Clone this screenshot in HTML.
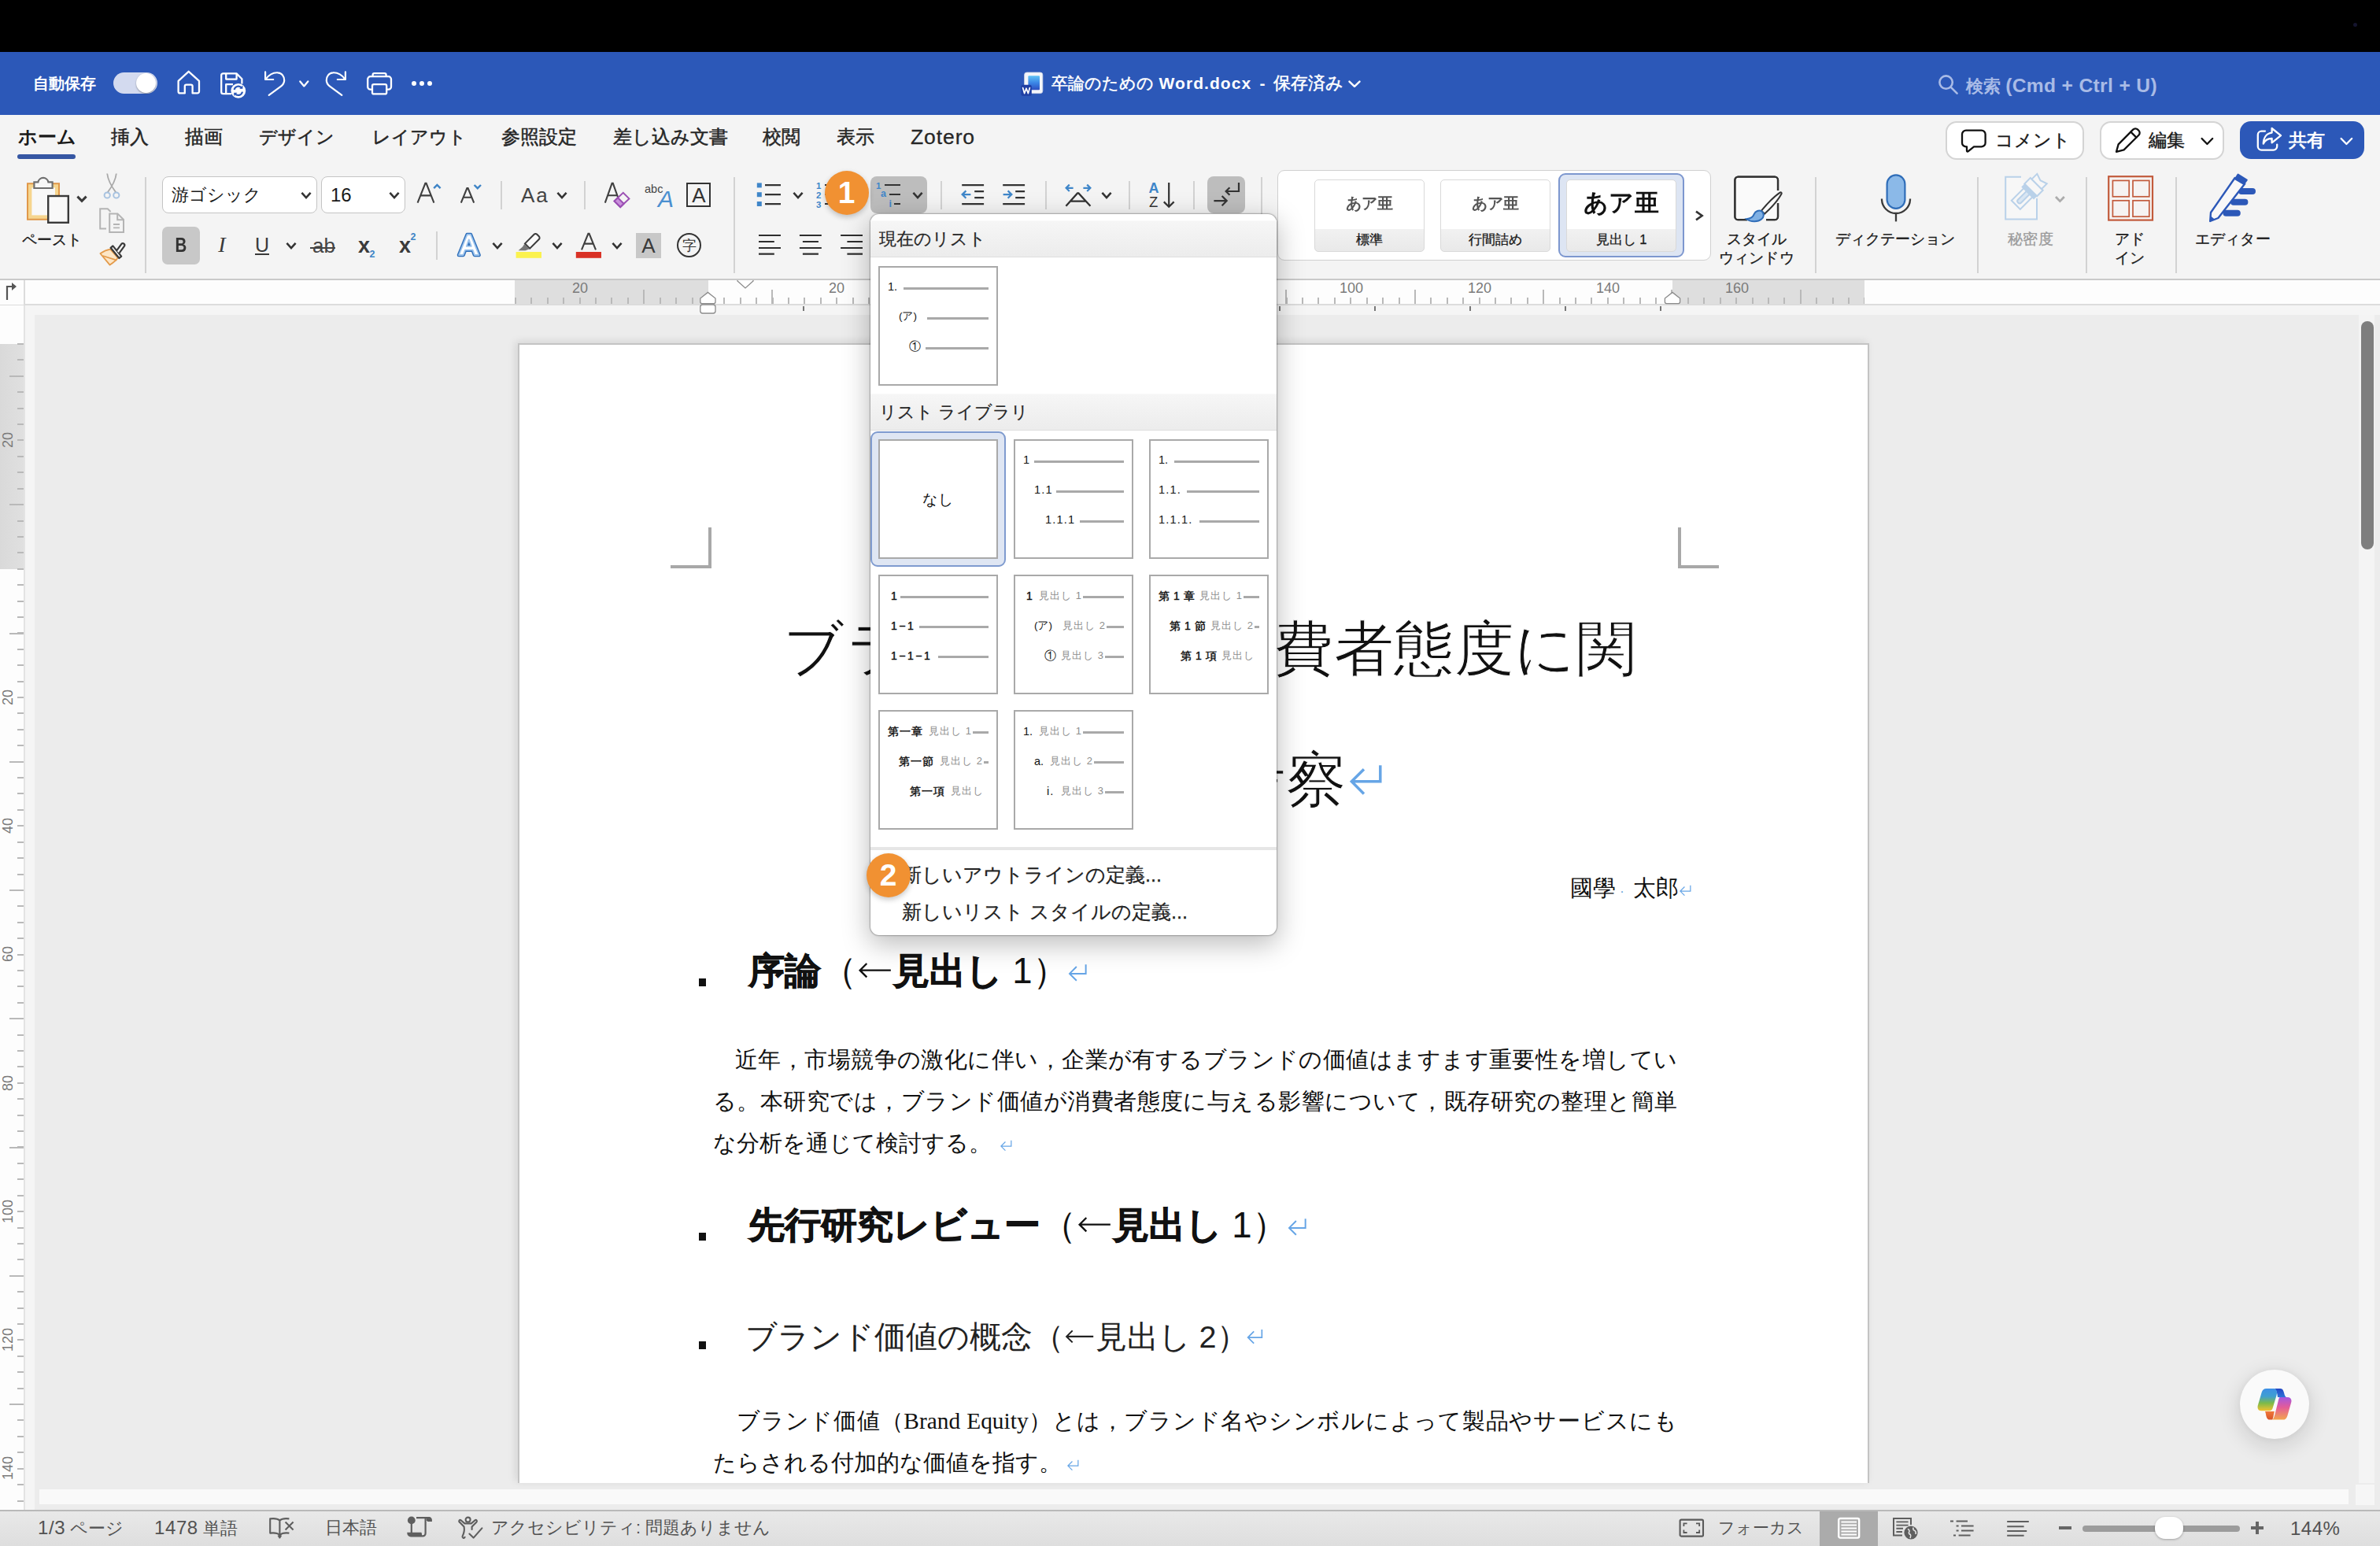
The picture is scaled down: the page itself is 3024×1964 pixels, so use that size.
<!DOCTYPE html>
<html lang="ja"><head>
<meta charset="utf-8">
<title>卒論のための Word.docx</title>
<style>
html,body{margin:0;padding:0}
body{width:3024px;height:1964px;position:relative;overflow:hidden;background:#ececec;font-family:"Liberation Sans",sans-serif;color:#222;-webkit-font-smoothing:antialiased}
.a{position:absolute}
.t{position:absolute;white-space:nowrap;line-height:1;margin:0}
.c{text-align:center}
svg{position:absolute;overflow:visible}
.sans{font-family:"Liberation Sans",sans-serif}
.serif{font-family:"Liberation Serif",serif}
.sep{position:absolute;width:2px;background:#d2d2d2}
.car{position:absolute}
.bt{position:absolute;white-space:nowrap;font-family:"Liberation Sans",sans-serif;font-size:29.4px;line-height:40px;height:40px;color:#111}
.just{text-align:justify;text-align-last:justify;text-justify:inter-character;white-space:nowrap;overflow:visible}
.ret{color:#5b9bd5}
.j{text-align:justify;text-align-last:justify;text-justify:inter-character}
svg.la{position:static;display:inline-block;width:1em;height:.6em;vertical-align:.06em;overflow:visible}
svg.rt{position:static;display:inline-block;width:.6em;height:.54em;vertical-align:-.02em;overflow:visible}
</style>
</head>
<body>
<svg width="0" height="0" style="position:absolute"><defs><symbol id="rt" viewBox="0 0 60 54"><path d="M55 3 V30 H7 M27.6 9.4 L7 30 L27.6 50.6" fill="none" stroke="#66a5e6" stroke-width="4.6" stroke-linejoin="miter"></path></symbol><symbol id="la" viewBox="0 0 100 60"><path d="M8 30 H94 M27 11 L8 30 L27 49" fill="none" stroke="currentColor" stroke-width="5.2"></path></symbol></defs></svg>
<!-- macOS menu area (black) -->
<div class="a" style="left:0;top:0;width:3024px;height:66px;background:#000"></div>
<div class="a" style="left:2990px;top:29px;width:5px;height:5px;border-radius:3px;background:#15152e"></div>
<!-- title bar -->
<div class="a" style="left:0;top:66px;width:3024px;height:80px;background:#2c58b8"></div>
<div class="t j" style="left: 42px; top: 92px; height: 28px; line-height: 28px; font-size: 20px; font-weight: bold; color: rgb(255, 255, 255); width: 80.02px;">自動保存</div>
<div class="a" style="left:144px;top:92px;width:56px;height:27px;border-radius:14px;background:#d3daef"></div>
<div class="a" style="left:173px;top:93px;width:25px;height:25px;border-radius:13px;background:#fff;box-shadow:0 1px 2px rgba(0,0,0,.35)"></div>
<div class="t j" style="left: 1336px; top: 91px; height: 30px; line-height: 30px; font-size: 21.2px; color: rgb(255, 255, 255); -webkit-text-stroke: 0.5px rgb(255, 255, 255); width: 130.02px;">卒論のための</div>
<div class="t" style="left:1472.6px;top:91px;height:30px;line-height:30px;font-size:21px;font-weight:bold;letter-spacing:1.05px;color:#fff">Word.docx</div>
<div class="t" style="left:1600.5px;top:91px;height:30px;line-height:30px;font-size:21px;font-weight:bold;color:#fff">-</div>
<div class="t j" style="left: 1618.4px; top: 91px; height: 30px; line-height: 30px; font-size: 21.8px; color: rgb(255, 255, 255); -webkit-text-stroke: 0.5px rgb(255, 255, 255); width: 89.02px;">保存済み</div>
<div class="t j" style="left: 2498px; top: 94px; height: 30px; line-height: 30px; font-size: 22px; font-weight: bold; color: rgb(169, 187, 230); width: 242.96px;">検索 <span style="font-size:24.6px;letter-spacing:.35px">(Cmd + Ctrl + U)</span></div>
<!-- title bar icons -->
<svg style="left:225px;top:89px" width="30" height="32" viewBox="0 0 30 32" fill="none" stroke="#fff" stroke-width="2.3" stroke-linejoin="round" stroke-linecap="round">
 <path d="M14.7 1.8 L1.6 13.8 V27.2 a2.2 2.2 0 0 0 2.2 2.2 H9.8 V20.6 a2 2 0 0 1 2-2 h5.8 a2 2 0 0 1 2 2 V29.4 H25.8 a2.2 2.2 0 0 0 2.2-2.2 V13.8 Z"></path>
</svg>
<svg style="left:279px;top:91px" width="34" height="34" viewBox="0 0 34 34" fill="none" stroke="#fff" stroke-width="2.3" stroke-linejoin="round">
 <path d="M4.6 2.4 H21.5 L28.4 9.3 V15.5 M15 28.2 H4.6 a2.4 2.4 0 0 1-2.4-2.4 V4.8 a2.4 2.4 0 0 1 2.4-2.4"></path>
 <path d="M8.2 2.6 V9.6 H21.6 V2.6"></path>
 <path d="M8.2 28 V16.2 H17"></path>
 <circle cx="23.8" cy="24.3" r="9.4" fill="#fff" stroke="none"></circle>
 <path d="M18.6 23 a5.4 5.4 0 0 1 9.6-2.2 M29 25.6 a5.4 5.4 0 0 1-9.6 2.2" stroke="#2c58b8" stroke-width="2.2"></path>
 <path d="M29.4 17.6 v4.2 h-4.2z M18.2 31 v-4.2 h4.2z" fill="#2c58b8" stroke="none"></path>
</svg>
<svg style="left:334px;top:89px" width="30" height="34" viewBox="0 0 30 34" fill="none" stroke="#fff" stroke-width="2.2" stroke-linecap="round" stroke-linejoin="round">
 <path d="M3.1 2.4 V12 H13.2"></path><path d="M3.6 11.6 C8 5.6 14 3 19 3.3 C24 3.4 27.2 8 27.2 13 C27.2 16.5 25.6 18.6 23 20.6 L7.7 31.9"></path>
</svg>
<svg style="left:380px;top:102px" width="14" height="10" viewBox="0 0 14 10" fill="none" stroke="#fff" stroke-width="2.3" stroke-linecap="round" stroke-linejoin="round"><path d="M1.3 1.5 L6.3 7.4 L11.3 1.5"></path></svg>
<svg style="left:412px;top:89px" width="30" height="34" viewBox="0 0 30 34" fill="none" stroke="#fff" stroke-width="2.2" stroke-linecap="round" stroke-linejoin="round">
 <g transform="translate(30,0) scale(-1,1)"><path d="M3.1 2.4 V12 H13.2"></path><path d="M3.6 11.6 C8 5.6 14 3 19 3.3 C24 3.4 27.2 8 27.2 13 C27.2 16.5 25.6 18.6 23 20.6 L7.7 31.9"></path></g>
</svg>
<svg style="left:465px;top:91px" width="34" height="30" viewBox="0 0 34 30" fill="none" stroke="#fff" stroke-width="2.3" stroke-linejoin="round">
 <path d="M8.6 6.2 V4.2 a2 2 0 0 1 2-2 h13 a2 2 0 0 1 2 2 V6.2"></path>
 <path d="M7.8 22.6 H5.6 a3.4 3.4 0 0 1-3.4-3.4 V9.6 a3.4 3.4 0 0 1 3.4-3.4 H28.6 a3.4 3.4 0 0 1 3.4 3.4 V19.2 a3.4 3.4 0 0 1-3.4 3.4 H26.4"></path>
 <rect x="8" y="16.2" width="18.2" height="12.2" rx="2"></rect>
</svg>
<div class="a" style="left:522.6px;top:103px;width:6px;height:6px;border-radius:3px;background:#fff"></div>
<div class="a" style="left:532.8px;top:103px;width:6px;height:6px;border-radius:3px;background:#fff"></div>
<div class="a" style="left:543px;top:103px;width:6px;height:6px;border-radius:3px;background:#fff"></div>
<!-- doc icon -->
<svg style="left:1296px;top:90px" width="32" height="34" viewBox="0 0 32 34">
 <defs><linearGradient id="dg" x1="0" y1="0" x2="0" y2="1"><stop offset="0" stop-color="#5fc3f5"></stop><stop offset=".5" stop-color="#3b86e6"></stop><stop offset="1" stop-color="#2d4fc0"></stop></linearGradient></defs>
 <rect x="5.6" y="2" width="23.2" height="26.6" rx="3" fill="#f4f6fa" stroke="#cfd6e6" stroke-width=".8"></rect>
 <rect x="10.4" y="6.2" width="14.6" height="18" rx="1" fill="url(#dg)"></rect>
 <rect x="1.4" y="17.8" width="13.4" height="14" rx="2.6" fill="#1f3fa3"></rect>
 <path d="M3.6 21.6 l2 7 l2.4-6.4 l2.4 6.4 l2-7" fill="none" stroke="#fff" stroke-width="1.7" stroke-linejoin="round" stroke-linecap="round"></path>
</svg>
<svg style="left:1713px;top:102px" width="17" height="10" viewBox="0 0 17 10" fill="none" stroke="#fff" stroke-width="2.5" stroke-linecap="round" stroke-linejoin="round"><path d="M1.5 1.6 L8 7.8 L14.5 1.6"></path></svg>
<!-- search icon -->
<svg style="left:2462px;top:94px" width="28" height="28" viewBox="0 0 28 28" fill="none" stroke="#a9bbe6" stroke-width="2.6" stroke-linecap="round"><circle cx="10.6" cy="10.6" r="8.2"></circle><path d="M16.8 16.8 L24.6 24.6"></path></svg>
<!-- ribbon background -->
<div class="a" style="left:0;top:146px;width:3024px;height:208px;background:#f4f4f4"></div>
<div class="a" style="left:0;top:354px;width:3024px;height:2px;background:#c9c9c9"></div>
<!-- tabs -->
<style>.tab{position:absolute;top:158px;height:32px;line-height:32px;font-size:23.1px;color:#262626;white-space:nowrap;-webkit-text-stroke:.5px #262626}</style>
<div class="tab j" style="left: 23px; font-weight: bold; color: rgb(26, 26, 26); font-size: 23.5px; -webkit-text-stroke: 0px; width: 74.02px;">ホーム</div>
<div class="a" style="left:22px;top:196px;width:74px;height:6px;border-radius:3px;background:#3657a3"></div>
<div class="tab j" style="left: 141px; font-size: 23.7px; width: 48.02px;">挿入</div>
<div class="tab j" style="left: 235px; font-size: 23.7px; width: 48.02px;">描画</div>
<div class="tab j" style="left: 329px; width: 96.02px;">デザイン</div>
<div class="tab j" style="left: 473px; width: 120.02px;">レイアウト</div>
<div class="tab j" style="left: 637px; font-size: 23.7px; width: 96.02px;">参照設定</div>
<div class="tab j" style="left: 779px; font-size: 23.7px; width: 146.02px;">差し込み文書</div>
<div class="tab j" style="left: 969px; font-size: 23.7px; width: 48.02px;">校閲</div>
<div class="tab j" style="left: 1063px; font-size: 23.7px; width: 48.02px;">表示</div>
<div class="tab" style="left:1157px;font-size:26.5px;letter-spacing:.9px;-webkit-text-stroke:.3px #262626">Zotero</div>
<!-- right buttons -->
<div class="a" style="left:2472px;top:154px;width:172px;height:45px;border:2px solid #d4d4d4;border-radius:14px;background:#fff;box-sizing:content-box"></div>
<div class="t j" style="left: 2535px; top: 163px; height: 30px; line-height: 30px; font-size: 23px; color: rgb(26, 26, 26); -webkit-text-stroke: 0.35px; width: 96.02px;">コメント</div>
<div class="a" style="left:2668px;top:154px;width:154px;height:45px;border:2px solid #d4d4d4;border-radius:14px;background:#fff"></div>
<div class="t j" style="left: 2730px; top: 163px; height: 30px; line-height: 30px; font-size: 23.4px; color: rgb(26, 26, 26); -webkit-text-stroke: 0.45px; width: 46.02px;">編集</div>
<div class="a" style="left:2846px;top:154px;width:158px;height:48px;border-radius:14px;background:#2c58b8"></div>
<div class="t j" style="left: 2908px; top: 163px; height: 30px; line-height: 30px; font-size: 23.4px; color: rgb(255, 255, 255); font-weight: bold; width: 46.02px;">共有</div>
<!-- ribbon: clipboard -->
<div class="t j" style="left: 28px; top: 294px; height: 22px; line-height: 22px; font-size: 18.7px; color: rgb(26, 26, 26); -webkit-text-stroke: 0.3px; width: 76.02px;">ペースト</div>
<div class="sep" style="left:184px;top:225px;height:122px"></div>
<!-- font boxes -->
<div class="a" style="left:206.2px;top:224.2px;width:194.6px;height:44.6px;border:1.5px solid #c4c4c4;border-radius:8px;background:#fff"></div>
<div class="t j" style="left: 218px; top: 233px; height: 30px; line-height: 30px; font-size: 22px; color: rgb(26, 26, 26); width: 114.02px;">游ゴシック</div>
<div class="a" style="left:408.4px;top:224.2px;width:104.6px;height:44.6px;border:1.5px solid #c4c4c4;border-radius:8px;background:#fff"></div>
<div class="t" style="left:420px;top:233px;height:30px;line-height:30px;font-size:24px;color:#1a1a1a">16</div>
<div class="sep" style="left:636px;top:230px;height:36px"></div>
<div class="sep" style="left:742px;top:230px;height:36px"></div>
<div class="sep" style="left:932px;top:225px;height:122px"></div>
<!-- row2 -->
<div class="a" style="left:206px;top:288px;width:48px;height:48px;border-radius:7px;background:#c8c8c8"></div>
<div class="sep" style="left:554px;top:294px;height:36px"></div>
<div class="a" style="left:808px;top:296px;width:32px;height:32px;background:#c8c8c8"></div>
<!-- paragraph group -->
<div class="a" style="left:1106px;top:224px;width:72px;height:47px;border-radius:8px;background:#bdbdbd"></div>
<div class="sep" style="left:1195px;top:230px;height:36px"></div>
<div class="sep" style="left:1328px;top:230px;height:36px"></div>
<div class="sep" style="left:1434px;top:230px;height:36px"></div>
<div class="sep" style="left:1516px;top:230px;height:36px"></div>
<div class="a" style="left:1534px;top:224px;width:48px;height:47px;border-radius:8px;background:#bdbdbd"></div>
<div class="sep" style="left:1602px;top:225px;height:122px"></div>
<!-- styles gallery -->
<div class="a" style="left:1623.4px;top:216.4px;width:549px;height:112.4px;border:1.6px solid #d0d0d0;border-radius:9px;background:#fff"></div>
<style>.sty{position:absolute;top:228px;width:140px;height:92px;border:1px solid #d9d9d9;border-radius:5px;background:linear-gradient(#fff 0,#fff 62.5px,#f1f1f1 62.5px,#e9e9e9 100%);box-sizing:border-box}
.styl{position:absolute;top:292px;width:140px;height:24px;line-height:24px;font-size:16.5px;color:#1a1a1a;text-align:center;white-space:nowrap;-webkit-text-stroke:.3px}
.styp{position:absolute;width:140px;text-align:center;white-space:nowrap}</style>
<div class="a" style="left:1980px;top:220px;width:156px;height:103px;border:2px solid #7d97cf;border-radius:9px;background:#dde5f3"></div>
<div class="sty" style="left:1670px"></div><div class="sty" style="left:1830px"></div><div class="sty" style="left:1990px"></div>
<div class="styp" style="left:1670px;top:244px;height:28px;line-height:28px;font-size:19.8px;color:#555;font-weight:bold;filter:blur(.7px)"><span class="j" style="display: inline-block; width: 60.02px; vertical-align: top;">あア亜</span></div>
<div class="styp" style="left:1830px;top:244px;height:28px;line-height:28px;font-size:19.8px;color:#555;font-weight:bold;filter:blur(.7px)"><span class="j" style="display: inline-block; width: 60.02px; vertical-align: top;">あア亜</span></div>
<div class="styp" style="left:1990px;top:238px;height:40px;line-height:40px;font-size:31px;color:#111;font-weight:bold;filter:blur(.6px)"><span class="j" style="display: inline-block; width: 95.02px; vertical-align: top;">あア亜</span></div>
<div class="styl" style="left:1670px"><span class="j" style="display: inline-block; width: 34.02px; vertical-align: top;">標準</span></div><div class="styl" style="left:1830px"><span class="j" style="display: inline-block; width: 68.02px; vertical-align: top;">行間詰め</span></div><div class="styl" style="left:1990px"><span class="j" style="display: inline-block; width: 64.79px; vertical-align: top;">見出し 1</span></div>
<!-- big buttons labels -->
<style>.bl{position:absolute;height:24px;line-height:24px;font-size:18.7px;color:#1a1a1a;-webkit-text-stroke:.3px;text-align:center;white-space:nowrap}</style>
<div class="bl" style="left:2172px;width:120px;top:292px"><span class="j" style="display: inline-block; width: 76.02px; vertical-align: top;">スタイル</span></div>
<div class="bl" style="left:2172px;width:120px;top:316px"><span class="j" style="display: inline-block; width: 95.02px; vertical-align: top;">ウィンドウ</span></div>
<div class="sep" style="left:2306px;top:225px;height:122px"></div>
<div class="bl" style="left:2318px;width:180px;top:292px"><span class="j" style="display: inline-block; width: 152.02px; vertical-align: top;">ディクテーション</span></div>
<div class="sep" style="left:2512px;top:225px;height:122px"></div>
<div class="bl" style="left:2520px;width:120px;top:292px;color:#9b9b9b"><span class="j" style="display: inline-block; width: 57.02px; vertical-align: top;">秘密度</span></div>
<div class="sep" style="left:2650px;top:225px;height:122px"></div>
<div class="bl" style="left:2646px;width:120px;top:292px"><span class="j" style="display: inline-block; width: 38.02px; vertical-align: top;">アド</span></div>
<div class="bl" style="left:2646px;width:120px;top:316px"><span class="j" style="display: inline-block; width: 38.02px; vertical-align: top;">イン</span></div>
<div class="sep" style="left:2764px;top:225px;height:122px"></div>
<div class="bl" style="left:2777px;width:120px;top:292px"><span class="j" style="display: inline-block; width: 95.02px; vertical-align: top;">エディター</span></div>
<!-- ===== ribbon icons A: clipboard + font ===== -->
<style>.ic{font-family:"Liberation Sans",sans-serif;position:absolute;white-space:nowrap;line-height:1;color:#3a3a3a}</style>
<!-- paste -->
<svg style="left:32px;top:222px" width="60" height="64" viewBox="0 0 60 64">
 <rect x="3" y="11.2" width="40" height="45.6" fill="#f6d58e" stroke="#e0984a" stroke-width="2"></rect>
 <rect x="8.4" y="16.4" width="29.6" height="35" fill="#f8f8f8"></rect>
 <path d="M11.4 17 V9.4 H16.4 a6.6 6.6 0 0 1 13 0 H34.6 V17 Z" fill="#f8f8f8" stroke="#6f6f6f" stroke-width="2.2" stroke-linejoin="miter"></path>
 <rect x="29.2" y="27" width="25.6" height="33.8" fill="#f9f9f9" stroke="#3a3a3a" stroke-width="2.4"></rect>
</svg>
<svg style="left:97px;top:248px" width="14" height="10" viewBox="0 0 14 10" fill="none" stroke="#3a3a3a" stroke-width="3" stroke-linejoin="miter"><path d="M1.4 1.6 L7 7.4 L12.6 1.6"></path></svg>
<!-- scissors -->
<svg style="left:130px;top:219px" width="24" height="35" viewBox="0 0 24 35" fill="none">
 <path d="M6.2 1.5 C7 9 11 17 17.4 25.6 M17.8 1.5 C17 9 13 17 6.6 25.6" stroke="#a9a9a9" stroke-width="1.8"></path>
 <circle cx="6.2" cy="29" r="3.6" stroke="#a8c3e0" stroke-width="2"></circle><circle cx="17.8" cy="29" r="3.6" stroke="#a8c3e0" stroke-width="2"></circle>
</svg>
<!-- copy -->
<svg style="left:125px;top:263px" width="36" height="36" viewBox="0 0 36 36" fill="none" stroke="#b4b4b4" stroke-width="2">
 <path d="M10 27.6 H2.2 V2.2 H11.8 L15.6 6"></path>
 <path d="M14.2 8.4 H24.4 L32 16 V32 H14.2 Z" fill="#f4f4f4"></path>
 <path d="M24.2 8.6 V16.2 H31.8"></path>
 <path d="M19 22 H27 M19 26.4 H27" stroke-width="1.8"></path>
</svg>
<!-- format painter -->
<svg style="left:125px;top:306px" width="36" height="34" viewBox="0 0 36 34">
 <path d="M15.2 10.6 C10 11.4 6 13.6 2.4 16 L14.6 30.6 C18.6 28 22.6 25 24.8 21.6 Z" fill="#fde6c6" stroke="#e39a4a" stroke-width="1.8" stroke-linejoin="round"></path>
 <path d="M5.6 19 L23.4 24.6" stroke="#e39a4a" stroke-width="1.8"></path>
 <path d="M15.6 8.8 L18.4 6.4 L29.2 19.6 L26.4 22 Z" fill="#f8f8f8" stroke="#3a3a3a" stroke-width="2.2" stroke-linejoin="round"></path>
 <path d="M23 12.6 L29.4 3.8 a2.3 2.3 0 0 1 3.6 2.8 L26.6 15.4" fill="#f8f8f8" stroke="#3a3a3a" stroke-width="2.2" stroke-linejoin="round"></path>
</svg>
<!-- font box carets -->
<svg style="left:382px;top:243px" width="14" height="11" viewBox="0 0 14 11" fill="none" stroke="#333" stroke-width="2.6"><path d="M1.4 1.8 L7 8 L12.6 1.8"></path></svg>
<svg style="left:494px;top:243px" width="14" height="11" viewBox="0 0 14 11" fill="none" stroke="#333" stroke-width="2.6"><path d="M1.4 1.8 L7 8 L12.6 1.8"></path></svg>
<!-- grow / shrink -->
<svg style="left:529px;top:231px" width="34" height="28" viewBox="0 0 34 28" fill="none">
 <path d="M1.6 26.6 L11.4 1.8 H12.6 L22.4 26.6 M5.4 17.4 H18.6" stroke="#3f3f3f" stroke-width="2.1"></path>
 <path d="M22.2 8.2 L26.4 4 L30.6 8.2" stroke="#3e84c6" stroke-width="2.4"></path>
</svg>
<svg style="left:584px;top:231px" width="30" height="28" viewBox="0 0 30 28" fill="none">
 <path d="M1.8 26.6 L9.4 8 H10.6 L18.2 26.6 M4.6 19.8 H15.4" stroke="#3f3f3f" stroke-width="2.1"></path>
 <path d="M18.6 4 L22.8 8.2 L27 4" stroke="#3e84c6" stroke-width="2.4"></path>
</svg>
<!-- Aa -->
<div class="ic" style="left:662px;top:233px;font-size:26px;letter-spacing:2px;height:30px;line-height:30px;color:#444">Aa</div>
<svg style="left:707px;top:243px" width="14" height="11" viewBox="0 0 14 11" fill="none" stroke="#333" stroke-width="2.6"><path d="M1.4 1.8 L7 8 L12.6 1.8"></path></svg>
<!-- clear formatting -->
<svg style="left:767px;top:231px" width="36" height="34" viewBox="0 0 36 34" fill="none">
 <path d="M1.8 26.6 L10.6 1.8 H11.8 L20.6 26.6 M5.2 17.2 H17.2" stroke="#3f3f3f" stroke-width="2.1"></path>
 <path d="M13.6 24.4 L24.8 13.8 L32.4 21.4 L21.2 32 Z" fill="#f4f4f4" stroke="#9b4fb3" stroke-width="2"></path>
 <path d="M13.6 24.4 L18 20.2 L25.6 27.8 L21.2 32 Z" fill="#c990dc" stroke="#9b4fb3" stroke-width="2"></path>
</svg>
<!-- phonetic guide -->
<div class="ic" style="left:819px;top:232px;font-size:14.5px;height:16px;line-height:16px;color:#444">abc</div>
<div class="ic" style="left:836px;top:238px;font-size:30px;height:30px;line-height:30px;font-style:italic;color:#4a8fd0">A</div>
<!-- boxed A -->
<div class="a" style="left:872px;top:232px;width:27px;height:27px;border:2.4px solid #333"></div>
<div class="ic" style="left:872px;top:234px;width:32px;text-align:center;font-size:26px;height:28px;line-height:28px;color:#333">A</div>
<!-- row 2: B I U ab x2 x2 -->
<div class="ic" style="left:206px;top:296px;width:48px;text-align:center;font-size:25.6px;font-weight:bold;height:30px;line-height:30px;color:#333;transform:scaleX(.8)">B</div>
<div class="ic serif" style="left:272px;top:296px;width:20px;text-align:center;font-size:28px;font-style:italic;height:30px;line-height:30px;color:#3a3a3a;font-family:'Liberation Serif',serif">I</div>
<div class="ic" style="left:322px;top:296px;width:22px;text-align:center;font-size:25px;height:30px;line-height:30px;color:#3a3a3a">U</div>
<div class="a" style="left:324px;top:321.5px;width:18px;height:2.2px;background:#3a3a3a"></div>
<svg style="left:363px;top:307px" width="14" height="11" viewBox="0 0 14 11" fill="none" stroke="#333" stroke-width="2.6"><path d="M1.4 1.8 L7 8 L12.6 1.8"></path></svg>
<div class="ic" style="left:397px;top:297px;font-size:26px;height:30px;line-height:30px;color:#444">ab</div>
<div class="a" style="left:394px;top:313.6px;width:32px;height:2px;background:#444"></div>
<div class="ic" style="left:455px;top:297px;font-size:27px;font-weight:bold;height:30px;line-height:30px;color:#3a3a3a">x</div>
<div class="ic" style="left:469.5px;top:317px;font-size:12.5px;font-weight:bold;height:13px;line-height:13px;color:#3e84c6">2</div>
<div class="ic" style="left:507px;top:297px;font-size:27px;font-weight:bold;height:30px;line-height:30px;color:#3a3a3a">x</div>
<div class="ic" style="left:521.5px;top:294.5px;font-size:12.5px;font-weight:bold;height:13px;line-height:13px;color:#3e84c6">2</div>
<!-- text effects A -->
<svg style="left:578px;top:294px" width="36" height="34" viewBox="0 0 36 34" fill="none" stroke-linejoin="round">
 <path d="M5 30 L15.6 4 H20 L30.6 30 H25 L22.6 23.6 H13 L10.6 30 Z M14.8 18.8 H20.8 L17.8 10.4 Z" fill="#fff" stroke="#2f6fba" stroke-width="4.6" fill-rule="evenodd"></path>
 <path d="M5 30 L15.6 4 H20 L30.6 30 H25 L22.6 23.6 H13 L10.6 30 Z M14.8 18.8 H20.8 L17.8 10.4 Z" fill="#fff" stroke="#9cc3ec" stroke-width="1.8" fill-rule="evenodd"></path>
</svg>
<svg style="left:625px;top:307px" width="14" height="11" viewBox="0 0 14 11" fill="none" stroke="#333" stroke-width="2.6"><path d="M1.4 1.8 L7 8 L12.6 1.8"></path></svg>
<!-- highlighter -->
<svg style="left:654px;top:294px" width="36" height="36" viewBox="0 0 36 36">
 <rect x="1.6" y="26" width="32.4" height="7.8" fill="#fbf24f"></rect>
 <path d="M13 15.4 L24.6 3.8 a2.6 2.6 0 0 1 3.7 0 L30.8 6.3 a2.6 2.6 0 0 1 0 3.7 L19.2 21.6 Z" fill="#fafafa" stroke="#3a3a3a" stroke-width="2"></path>
 <path d="M12.4 15.8 L19 22.2 L13.6 24.2 H4.6 L10 19.6 Z" fill="#767676"></path>
</svg>
<svg style="left:701px;top:307px" width="14" height="11" viewBox="0 0 14 11" fill="none" stroke="#333" stroke-width="2.6"><path d="M1.4 1.8 L7 8 L12.6 1.8"></path></svg>
<!-- font color -->
<svg style="left:730px;top:294px" width="36" height="36" viewBox="0 0 36 36" fill="none">
 <rect x="1.8" y="26" width="32.2" height="7.8" fill="#d93226"></rect>
 <path d="M9 23.4 L17.4 2.8 H18.6 L27 23.4 M12.2 15.6 H23.8" stroke="#3f3f3f" stroke-width="2.1"></path>
</svg>
<svg style="left:777px;top:307px" width="14" height="11" viewBox="0 0 14 11" fill="none" stroke="#333" stroke-width="2.6"><path d="M1.4 1.8 L7 8 L12.6 1.8"></path></svg>
<!-- shaded A -->
<div class="ic" style="left:808px;top:298px;width:32px;text-align:center;font-size:26px;height:28px;line-height:28px;color:#3a3a3a">A</div>
<!-- circled char -->
<div class="a" style="left:860px;top:296px;width:27px;height:27px;border:2.4px solid #333;border-radius:50%"></div>
<div class="ic" style="left:860px;top:301px;width:32px;text-align:center;font-size:18px;height:22px;line-height:22px;color:#333">字</div>
<!-- ===== ribbon icons B: paragraph group ===== -->
<!-- bullets -->
<svg style="left:960px;top:230px" width="36" height="34" viewBox="0 0 36 34">
 <g fill="#3f86c9"><rect x="1.8" y="2.4" width="6" height="6"></rect><rect x="1.8" y="14.2" width="6" height="6"></rect><rect x="1.8" y="26" width="6" height="6"></rect></g>
 <g stroke="#333" stroke-width="2.2"><path d="M12 5.2 H32 M12 17.1 H32 M12 29.1 H32"></path></g>
</svg>
<svg style="left:1007px;top:243px" width="14" height="11" viewBox="0 0 14 11" fill="none" stroke="#333" stroke-width="2.6"><path d="M1.4 1.8 L7 8 L12.6 1.8"></path></svg>
<!-- numbering (mostly hidden by badge) -->
<div class="ic" style="left:1037px;top:230px;font-size:11.5px;font-weight:bold;height:12px;line-height:12px;color:#3f86c9">1</div>
<div class="ic" style="left:1037px;top:242px;font-size:11.5px;font-weight:bold;height:12px;line-height:12px;color:#3f86c9">2</div>
<div class="ic" style="left:1037px;top:254px;font-size:11.5px;font-weight:bold;height:12px;line-height:12px;color:#3f86c9">3</div>
<div class="a" style="left:1048px;top:234px;width:20px;height:2.2px;background:#333"></div>
<div class="a" style="left:1048px;top:246px;width:20px;height:2.2px;background:#333"></div>
<div class="a" style="left:1048px;top:258px;width:20px;height:2.2px;background:#333"></div>
<!-- multilevel icon (on dark button) -->
<div class="ic" style="left:1113px;top:230px;font-size:11.5px;font-weight:bold;height:12px;line-height:12px;color:#3f86c9">1</div>
<div class="ic" style="left:1119px;top:240px;font-size:12.5px;font-weight:bold;height:13px;line-height:13px;color:#3f86c9">a</div>
<div class="ic" style="left:1129.4px;top:252.6px;font-size:12.5px;font-weight:bold;height:13px;line-height:13px;color:#3f86c9">i</div>
<div class="a" style="left:1124px;top:234px;width:20px;height:2.2px;background:#333"></div>
<div class="a" style="left:1129.6px;top:246px;width:14.4px;height:2.2px;background:#333"></div>
<div class="a" style="left:1136px;top:258px;width:8px;height:2.2px;background:#333"></div>
<svg style="left:1159px;top:243px" width="14" height="11" viewBox="0 0 14 11" fill="none" stroke="#333" stroke-width="2.6"><path d="M1.4 1.8 L7 8 L12.6 1.8"></path></svg>
<!-- decrease / increase indent -->
<svg style="left:1220px;top:230px" width="34" height="34" viewBox="0 0 34 34" fill="none">
 <path d="M2.2 5.2 H30.1 M18.2 13.1 H30.1 M18.2 21.1 H30.1 M2.2 29.1 H30.1" stroke="#333" stroke-width="2.2"></path>
 <path d="M2.6 17.1 H13.4 M7.4 12.4 L2.6 17.1 L7.4 21.8" stroke="#3f86c9" stroke-width="2.2"></path>
</svg>
<svg style="left:1272px;top:230px" width="34" height="34" viewBox="0 0 34 34" fill="none">
 <path d="M2.2 5.2 H30.1 M18.2 13.1 H30.1 M18.2 21.1 H30.1 M2.2 29.1 H30.1" stroke="#333" stroke-width="2.2"></path>
 <path d="M2.6 17.1 H13.4 M8.6 12.4 L13.4 17.1 L8.6 21.8" stroke="#3f86c9" stroke-width="2.2"></path>
</svg>
<!-- char scale -->
<svg style="left:1352px;top:230px" width="38" height="34" viewBox="0 0 38 34" fill="none">
 <path d="M2.4 31.8 L17 15.4 H18.4 L33.4 31.8 M8.4 25.6 H27.4" stroke="#333" stroke-width="2.3"></path>
 <path d="M2.6 8.8 H11.6 M6.8 4.6 L2.6 8.8 L6.8 13 M24.4 8.8 H33.4 M29.2 4.6 L33.4 8.8 L29.2 13" stroke="#3f86c9" stroke-width="2.2"></path>
</svg>
<svg style="left:1399px;top:243px" width="14" height="11" viewBox="0 0 14 11" fill="none" stroke="#333" stroke-width="2.6"><path d="M1.4 1.8 L7 8 L12.6 1.8"></path></svg>
<!-- sort -->
<div class="ic" style="left:1459.4px;top:229.6px;font-size:18px;font-weight:bold;height:18px;line-height:18px;color:#3f86c9">A</div>
<div class="ic" style="left:1460px;top:247.6px;font-size:18.5px;height:18px;line-height:18px;color:#333">Z</div>
<svg style="left:1476px;top:230px" width="18" height="36" viewBox="0 0 18 36" fill="none" stroke="#333" stroke-width="2.2"><path d="M9.2 2 V32.6 M2.8 26.4 L9.2 32.8 L15.6 26.4"></path></svg>
<!-- show marks -->
<svg style="left:1538px;top:228px" width="40" height="38" viewBox="0 0 40 38" fill="none" stroke="#333" stroke-width="2.2">
 <path d="M36 4 V15 H19.6 M24.4 10.2 L19.6 15 L24.4 19.8"></path>
 <path d="M4.4 27.1 H20.6 M14.6 21 L20.7 27.1 L14.6 33.2"></path>
</svg>
<!-- row 2 align -->
<svg style="left:962px;top:296px" width="140" height="30" viewBox="0 0 140 30" fill="none" stroke="#2e2e2e" stroke-width="2.1">
 <path d="M2 3 H30 M2 11 H21.8 M2 19 H30 M2 26.6 H21.8"></path>
 <path d="M53.9 3 H81.8 M57.9 11 H77.9 M53.9 19 H81.8 M57.9 26.6 H77.9"></path>
 <path d="M106.1 3 H134 M114.4 11 H134 M106.1 19 H134 M114.4 26.6 H134"></path>
</svg>
<!-- gallery arrow -->
<svg style="left:2153px;top:267px" width="12" height="14" viewBox="0 0 12 14" fill="none" stroke="#333" stroke-width="2.6"><path d="M2 1.6 L9.6 7 L2 12.4"></path></svg>
<!-- style window -->
<svg style="left:2202px;top:222px" width="66" height="62" viewBox="0 0 66 62" fill="none">
 <path d="M18 57.2 H6.4 a4 4 0 0 1-4-4 V6.6 a4 4 0 0 1 4-4 H53 a4 4 0 0 1 4 4 V20 M57 36 V53.2 a4 4 0 0 1-4 4 H42" stroke="#333" stroke-width="2.3" fill="none"></path>
 <rect x="3.6" y="3.8" width="52.2" height="52.2" rx="3" fill="#fafafa"></rect>
 <path d="M18 57.2 H6.4 a4 4 0 0 1-4-4 V6.6 a4 4 0 0 1 4-4 H53 a4 4 0 0 1 4 4 V20 M57 36 V53.2 a4 4 0 0 1-4 4 H42" stroke="#333" stroke-width="2.3" fill="none"></path>
 <path d="M36 45.6 C44 36 53 27 59.6 22.6 C61 21.8 62.2 23 61.4 24.6 C57.4 32 48.6 41.8 40.2 49.6 Z" fill="#fafafa" stroke="#333" stroke-width="2"></path>
 <path d="M36.6 46.4 C33 44.6 28.2 46 26.8 49.8 C25.6 53.2 22.4 55.6 17 56.2 C22 60 31.6 60.4 36 56.6 C39.6 53.6 39.8 49.4 36.6 46.4 Z" fill="#7fb0e4" stroke="#2f6db8" stroke-width="2"></path>
</svg>
<!-- dictation mic -->
<svg style="left:2386px;top:218px" width="46" height="66" viewBox="0 0 46 66" fill="none">
 <rect x="11.6" y="4.4" width="22.8" height="42.4" rx="11.4" fill="#8bb9e8" stroke="#2f6db8" stroke-width="2.2"></rect>
 <path d="M5 34.6 V35 a18 18 0 0 0 36 0 V34.6" stroke="#3a3a3a" stroke-width="2.3"></path>
 <path d="M23 53 V63.4" stroke="#3a3a3a" stroke-width="2.3"></path>
</svg>
<!-- sensitivity (disabled) -->
<svg style="left:2544px;top:218px" width="84" height="66" viewBox="0 0 84 66" fill="none" stroke="#b9d1e9" stroke-width="2">
 <path d="M24 6.8 H4.2 V60.6 H44 V34" fill="#f7f7f7"></path>
 <g transform="translate(11.8,36.8) rotate(-45)">
  <rect x="0" y="0" width="32" height="15.6" fill="#f7f7f7"></rect>
  <rect x="4" y="5" width="20" height="5.6" rx="2.8" fill="#d9e6f3"></rect>
  <rect x="21" y="-3.4" width="5.8" height="22.4" fill="#b9d1e9" stroke="none"></rect>
  <rect x="26.8" y="-3.4" width="10.6" height="22.4" fill="#f7f7f7"></rect>
  <path d="M37.4 -1 H47 L44 7.8 L47 16.6 H37.4 Z" fill="#f7f7f7"></path>
 </g>
 <path d="M68 32 L73.4 37.6 L78.8 32" stroke="#acacac" stroke-width="2.8"></path>
</svg>
<!-- add-in -->
<svg style="left:2676px;top:221px" width="62" height="62" viewBox="0 0 62 62" fill="#f6f3f2" stroke="#c25b3c">
 <rect x="3.2" y="3.2" width="55.8" height="55.4" stroke-width="2.2" fill="#f6f4f3"></rect>
 <g stroke-width="1.7"><rect x="8.4" y="8.4" width="20.8" height="20.4"></rect><rect x="34" y="8.4" width="20.8" height="20.4"></rect><rect x="8.4" y="33.8" width="20.8" height="20.4"></rect><rect x="34" y="33.8" width="20.8" height="20.4"></rect></g>
</svg>
<!-- editor -->
<svg style="left:2804px;top:218px" width="68" height="68" viewBox="0 0 68 68" fill="none">
 <g stroke="#2c58b8" stroke-width="8" stroke-linecap="round"><path d="M44 25 H58 M34 38.8 H48.4 M24.4 52.8 H38.8"></path></g>
 <path d="M35.6 8 L48.2 15.6 L14.4 59 L4.2 63 L5 52 Z" fill="#f8f8f8" stroke="#2c58b8" stroke-width="2.4" stroke-linejoin="round"></path>
 <path d="M36 9.4 L39.6 3.6 L50.8 10.6 L47 16 Z" fill="#2c58b8" stroke="#2c58b8" stroke-width="2" stroke-linejoin="round"></path>
 <path d="M4.2 63 L5 56.6 L9.8 60.4 Z" fill="#2c58b8"></path>
</svg>
<!-- comment / edit / share icons -->
<svg style="left:2490px;top:162px" width="36" height="34" viewBox="0 0 36 34" fill="none" stroke="#111" stroke-width="2.3" stroke-linejoin="round">
 <path d="M8 3.6 H27.6 a5 5 0 0 1 5 5 V19.4 a5 5 0 0 1-5 5 H18 L10.6 30.4 a1 1 0 0 1-1.6-.8 V24.4 H8 a5 5 0 0 1-5-5 V8.6 a5 5 0 0 1 5-5 Z"></path>
</svg>
<svg style="left:2686px;top:160px" width="36" height="36" viewBox="0 0 36 36" fill="none" stroke="#111" stroke-width="2.3" stroke-linejoin="round" stroke-linecap="round">
 <path d="M24.2 4.6 a4.2 4.2 0 0 1 6 0 L31.4 5.8 a4.2 4.2 0 0 1 0 6 L12.6 30.4 L3 32.8 L5.6 23.4 Z"></path><path d="M21.4 7.6 L28.4 14.6"></path>
</svg>
<svg style="left:2796px;top:174px" width="18" height="12" viewBox="0 0 18 12" fill="none" stroke="#111" stroke-width="2.3" stroke-linecap="round" stroke-linejoin="round"><path d="M1.6 2 L8.4 9 L15.2 2"></path></svg>
<svg style="left:2866px;top:160px" width="36" height="34" viewBox="0 0 36 34" fill="none" stroke="#fff" stroke-width="2.3" stroke-linejoin="round" stroke-linecap="round">
 <path d="M12 6.6 H7.4 a4.6 4.6 0 0 0-4.6 4.6 V26 a4.6 4.6 0 0 0 4.6 4.6 H22.6 a4.6 4.6 0 0 0 4.6-4.6 V23.6"></path>
 <path d="M20.6 3 L32 12.2 L20.6 21.4 V16 C15 16 11.6 18.4 9.8 22.6 C10 14.6 14 9.2 20.6 8.6 Z"></path>
</svg>
<svg style="left:2973px;top:174px" width="18" height="12" viewBox="0 0 18 12" fill="none" stroke="#fff" stroke-width="2.3" stroke-linecap="round" stroke-linejoin="round"><path d="M1.6 2 L8.4 9 L15.2 2"></path></svg>
<!-- horizontal ruler -->
<div class="a" style="left:0;top:356px;width:3024px;height:31px;background:#fdfdfd"></div>
<div class="a" style="left:654px;top:356px;width:246px;height:31px;background:#dedede"></div>
<div class="a" style="left:2125px;top:356px;width:244px;height:31px;background:#dedede"></div>
<div class="a" style="left:654.1px;top:378px;width:1715px;height:8px;background:repeating-linear-gradient(90deg,#b9b9b9 0,#b9b9b9 2px,transparent 2px,transparent 20.41px)"></div>
<div class="a" style="left:817.4px;top:368px;width:1540px;height:18px;background:repeating-linear-gradient(90deg,#b9b9b9 0,#b9b9b9 2px,transparent 2px,transparent 163.28px)"></div>
<div class="a" style="left:0;top:386px;width:3024px;height:2px;background:#dcdcdc"></div>
<div class="a" style="left:0;top:388px;width:3024px;height:12px;background:#f5f5f5"></div>
<style>.rn{position:absolute;top:356px;width:60px;height:20px;line-height:20px;font-size:18px;color:#7a7a7a;text-align:center}</style>
<div class="rn" style="left:707px">20</div><div class="rn" style="left:1033px">20</div>
<div class="rn" style="left:1687px">100</div><div class="rn" style="left:1850px">120</div><div class="rn" style="left:2013px">140</div><div class="rn" style="left:2177px">160</div>
<!-- tab stop ticks -->
<div class="a" style="left:1020px;top:389px;width:2px;height:6px;background:#777"></div>
<div class="a" style="left:1625px;top:389px;width:2px;height:6px;background:#777"></div>
<div class="a" style="left:1746px;top:389px;width:2px;height:6px;background:#777"></div>
<div class="a" style="left:1867px;top:389px;width:2px;height:6px;background:#777"></div>
<div class="a" style="left:1988px;top:389px;width:2px;height:6px;background:#777"></div>
<div class="a" style="left:2109px;top:389px;width:2px;height:6px;background:#777"></div>
<!-- markers -->
<svg style="left:880px;top:356px" width="90" height="44" viewBox="0 0 90 44">
 <path d="M9.8 27.6 v-4.6 l9.6-7.6 l9.6 7.6 v4.6 q0 2-2 2 h-15.2 q-2 0-2-2z" fill="#fff" stroke="#8a8a8a" stroke-width="1.3"></path>
 <rect x="9.8" y="31" width="19.2" height="11" rx="3" fill="#fff" stroke="#8a8a8a" stroke-width="1.3"></rect>
 <path d="M57 0 v1 l10 9 l10-9 v-1" fill="#fff" stroke="#8a8a8a" stroke-width="1.3"></path>
</svg>
<svg style="left:2105px;top:356px" width="40" height="32" viewBox="0 0 40 32">
 <path d="M10.4 27.6 v-4.6 l9.6-7.6 l9.6 7.6 v4.6 q0 2-2 2 h-15.2 q-2 0-2-2z" fill="#fff" stroke="#8a8a8a" stroke-width="1.3"></path>
</svg>
<!-- ruler corner box -->
<div class="a" style="left:0;top:356px;width:30px;height:31px;background:#fdfdfd;border-right:2px solid #dcdcdc"></div>
<svg style="left:6px;top:359px" width="20" height="24" viewBox="0 0 20 24"><path d="M3 22 V5 H10" fill="none" stroke="#555" stroke-width="2.2"></path><path d="M9 0 L15 5 L9 10z" fill="#555"></path></svg>
<!-- vertical ruler -->
<div class="a" style="left:0;top:388px;width:30px;height:1530px;background:#fdfdfd"></div>
<div class="a" style="left:0;top:437px;width:30px;height:286px;background:linear-gradient(90deg,#d9d9d9,#e0e0e0)"></div>
<div class="a" style="left:22px;top:435.8px;width:8px;height:1482px;background:repeating-linear-gradient(180deg,#b9b9b9 0,#b9b9b9 2px,transparent 2px,transparent 20.41px)"></div>
<div class="a" style="left:12px;top:476.6px;width:18px;height:1441px;background:repeating-linear-gradient(180deg,#b9b9b9 0,#b9b9b9 2px,transparent 2px,transparent 163.28px)"></div>
<div class="a" style="left:30px;top:388px;width:2px;height:1530px;background:#e3e3e3"></div>
<style>.vn{position:absolute;left:-20px;width:60px;height:20px;line-height:20px;font-size:18px;color:#7a7a7a;text-align:center;transform:rotate(-90deg)}</style>
<div class="vn" style="top:549px">20</div><div class="vn" style="top:876px">20</div><div class="vn" style="top:1039px">40</div><div class="vn" style="top:1202px">60</div><div class="vn" style="top:1366px">80</div><div class="vn" style="top:1529px">100</div><div class="vn" style="top:1692px">120</div><div class="vn" style="top:1855px">140</div>
<!-- doc area -->
<div class="a" style="left:44px;top:400px;width:2953px;height:1519px;background:#ececec"></div>
<div class="a" style="left:32px;top:400px;width:12px;height:1518px;background:#f5f5f5"></div>
<!-- page -->
<div class="a" style="left:658px;top:436px;width:1717px;height:1448px;background:#fff;border:2px solid #c4c4c4;border-bottom:none;box-sizing:border-box;box-shadow:-3px -2px 10px rgba(0,0,0,.10)"></div>
<!-- margin corners -->
<div class="a" style="left:852px;top:718px;width:52px;height:4px;background:#a8a8a8"></div>
<div class="a" style="left:900px;top:670px;width:4px;height:52px;background:#a8a8a8"></div>
<div class="a" style="left:2132px;top:718px;width:52px;height:4px;background:#a8a8a8"></div>
<div class="a" style="left:2132px;top:670px;width:4px;height:52px;background:#a8a8a8"></div>
<!-- title -->
<div class="t sans" style="left:995px;top:774px;width:1084px;height:100px;line-height:100px;font-size:76px;color:#111;font-weight:300;-webkit-text-stroke:.9px #fff" id="ttl1"><div class="just" style="height:100px">ブランド価値が消費者態度に関</div></div>
<div class="t sans j" style="left: 1322px; top: 941px; height: 100px; line-height: 100px; font-size: 76.6px; color: rgb(17, 17, 17); font-weight: 300; -webkit-text-stroke: 0.9px rgb(255, 255, 255); width: 435.61px;">する一考察<span style="font-size:76px;margin-left:1px;position:relative;top:-7px"><svg class="rt"><use href="#rt"></use></svg></span></div>
<!-- author -->
<div class="bt" style="right:875px;top:1108px;text-align:right"><span class="j" style="display: inline-block; width: 153.71px; vertical-align: top;">國學<span class="ret" style="font-size:16px;margin:0 3px 0 5px">·</span> 太郎<span style="font-size:27px"><svg class="rt"><use href="#rt"></use></svg></span></span></div>
<!-- heading 1 -->
<div class="a" style="left:888px;top:1243px;width:9px;height:10px;background:#111"></div>
<div class="t sans j" style="left: 951px; top: 1204px; height: 60px; line-height: 60px; font-size: 45.6px; font-weight: bold; color: rgb(17, 17, 17); -webkit-text-stroke: 0.9px rgb(17, 17, 17); width: 430.44px;">序論<span style="font-weight:normal;-webkit-text-stroke:0">（</span><svg class="la"><use href="#la"></use></svg>見出し <span style="font-weight:normal;-webkit-text-stroke:0">1）</span><span style="font-size:43px;margin-left:-2px;position:relative;top:-3px"><svg class="rt"><use href="#rt"></use></svg></span></div>
<!-- body 1 -->
<div class="bt" style="left:934px;top:1326px;width:1197px"><div class="just" style="height:40px">近年，市場競争の激化に伴い，企業が有するブランドの価値はますます重要性を増してい</div></div>
<div class="bt" style="left:906px;top:1379px;width:1225px"><div class="just" style="height:40px">る。本研究では，ブランド価値が消費者態度に与える影響について，既存研究の整理と簡単</div></div>
<div class="bt j" style="left: 906px; top: 1432px; width: 380.21px;">な分析を通じて検討する。<span style="font-size:27px;margin-left:10px"><svg class="rt"><use href="#rt"></use></svg></span></div>
<!-- heading 1 b -->
<div class="a" style="left:888px;top:1566px;width:9px;height:10px;background:#111"></div>
<div class="t sans j" style="left: 951px; top: 1527px; height: 60px; line-height: 60px; font-size: 45.6px; font-weight: bold; color: rgb(17, 17, 17); -webkit-text-stroke: 0.9px rgb(17, 17, 17); width: 709.44px;">先行研究レビュー<span style="font-weight:normal;-webkit-text-stroke:0">（</span><svg class="la"><use href="#la"></use></svg>見出し <span style="font-weight:normal;-webkit-text-stroke:0">1）</span><span style="font-size:43px;margin-left:-2px;position:relative;top:-3px"><svg class="rt"><use href="#rt"></use></svg></span></div>
<!-- heading 2 -->
<div class="a" style="left:888px;top:1704px;width:9px;height:10px;background:#111"></div>
<div class="t sans j" style="left: 947px; top: 1668px; height: 60px; line-height: 60px; font-size: 39.6px; font-weight: 300; color: rgb(34, 34, 34); width: 657.82px;">ブランド価値の概念（<svg class="la" style="stroke-width:.8"><use href="#la"></use></svg>見出し 2）<span style="font-size:37px;margin-left:-3px;position:relative;top:-5px"><svg class="rt"><use href="#rt"></use></svg></span></div>
<!-- body 2 -->
<div class="bt" style="left:936px;top:1785px;width:1195px"><div class="just" style="height:40px">ブランド価値（<span class="serif">Brand Equity</span>）とは，ブランド名やシンボルによって製品やサービスにも</div></div>
<div class="bt j" style="left: 906px; top: 1838px; width: 465.21px;">たらされる付加的な価値を指す。<span style="font-size:27px;margin-left:6px"><svg class="rt"><use href="#rt"></use></svg></span></div>
<!-- scrollbars -->
<div class="a" style="left:2997px;top:400px;width:20px;height:1484px;background:#f4f4f4"></div>
<div class="a" style="left:3017px;top:400px;width:7px;height:1484px;background:#ececec"></div>
<div class="a" style="left:3000px;top:408px;width:16px;height:290px;border-radius:8px;background:#7e7e7e"></div>
<div class="a" style="left:2997px;top:1884px;width:27px;height:35px;background:#ececec"></div>
<div class="a" style="left:50px;top:1892px;width:2934px;height:19px;background:#f9f9f9"></div>
<div class="a" style="left:2993px;top:1886px;width:24px;height:26px;background:#f6f6f6"></div>
<!-- copilot button -->
<div class="a" style="left:2846px;top:1740px;width:88px;height:88px;border-radius:44px;background:#fafafa;box-shadow:0 8px 26px 4px rgba(0,0,0,.11),0 0 8px rgba(0,0,0,.05)"></div>
<svg style="left:2866px;top:1762px" width="48" height="44" viewBox="0 0 48 44">
 <defs>
  <linearGradient id="cl" x1="0" y1="0" x2="0" y2="1"><stop offset="0" stop-color="#3d8fe6"></stop><stop offset=".35" stop-color="#3f9fd0"></stop><stop offset=".65" stop-color="#7cba4a"></stop><stop offset="1" stop-color="#f3c22f"></stop></linearGradient>
  <linearGradient id="cr" x1="0" y1="0" x2="0" y2="1"><stop offset="0" stop-color="#a557e0"></stop><stop offset=".45" stop-color="#e45c98"></stop><stop offset="1" stop-color="#f3a64c"></stop></linearGradient>
  <linearGradient id="cb" x1="0" y1="0" x2="0" y2="1"><stop offset="0" stop-color="#2348c4"></stop><stop offset="1" stop-color="#2f74d8"></stop></linearGradient>
  <linearGradient id="co" x1="0" y1="0" x2="0" y2="1"><stop offset="0" stop-color="#f0783a"></stop><stop offset="1" stop-color="#d8552a"></stop></linearGradient>
 </defs>
 <path d="M24 2.1 H31.4 C34.4 2.1 35.4 5 36.2 8 C36.8 10.4 37.4 12 39 13 H28 C27.4 8 26.6 4 24 2.1 Z" fill="url(#cb)"></path>
 <path d="M12 31.1 H23.8 C22.6 36 22.4 40 21.3 41.6 H17.6 C14.8 41.6 13.8 38.6 13.2 36 C12.8 33.6 12.6 32.2 12 31.1 Z" fill="url(#co)"></path>
 <path d="M13.6 2.1 H24 C27 3.4 27.6 6.6 26.4 11 L21.6 27 C20.8 29.4 19.4 30.3 17.4 30.3 H7.6 C3.6 30.3 1.8 27.6 2.8 23.6 L7.6 7 C8.6 3.6 10.6 2.1 13.6 2.1 Z" fill="url(#cl)"></path>
 <path d="M30.6 13 H40.4 C44.4 13 46.2 15.6 45.2 19.6 L40.4 36.4 C39.4 40 37.4 41.6 34.4 41.6 H21.3 C23 40 23.6 38 24.4 35 L28.4 19 C29 16.4 29.4 14 30.6 13 Z" fill="url(#cr)"></path>
</svg>
<!-- ===== popup ===== -->
<style>
.th{position:absolute;width:152px;height:151.5px;box-sizing:border-box;border:2px solid #a9a9a9;background:#fff}
.th b,.th i,.th s{position:absolute;white-space:nowrap;line-height:1;font-style:normal;text-decoration:none}
.th b{font-weight:normal;color:#111;font-size:14.5px;height:16px;line-height:16px}
.th i{color:#8e8e8e;font-size:13px;height:16px;line-height:16px;letter-spacing:1px}
.th s{height:3px;background:#a9a9a9;display:block}
.th .bb{font-weight:normal;font-size:14px;-webkit-text-stroke:.45px #111}
.ph{position:absolute;left:1106px;width:516px;background:linear-gradient(#f6f6f6,#ececec);border-top:1px solid #fafafa;border-bottom:1px solid #dedede;box-sizing:border-box}
</style>
<div class="a" style="left:1106px;top:272px;width:516px;height:916px;border-radius:11px;background:#fff;box-shadow:0 0 1.5px 1px rgba(0,0,0,.28),0 10px 34px 2px rgba(0,0,0,.26)"></div>
<div class="ph" style="top:280px;height:47px"></div>
<div class="t j" style="left: 1117px; top: 290px; height: 28px; line-height: 28px; font-size: 22px; color: rgb(38, 38, 38); -webkit-text-stroke: 0.2px; width: 136.02px;">現在のリスト</div>
<div class="ph" style="top:500px;height:47px"></div>
<div class="t j" style="left: 1117px; top: 510px; height: 28px; line-height: 28px; font-size: 21.5px; color: rgb(38, 38, 38); -webkit-text-stroke: 0.2px; width: 190px;">リスト ライブラリ</div>
<!-- current list thumb -->
<div class="th" style="left:1116px;top:338px">
 <b style="left:10px;top:16px">1.</b><s style="left:30px;top:24.5px;width:108px"></s>
 <b style="left:24px;top:54px;font-size:13.5px">(ア)</b><s style="left:60px;top:62.5px;width:78px"></s>
 <b style="left:37px;top:92px;font-size:15px">①</b><s style="left:58px;top:100.5px;width:80px"></s>
</div>
<!-- selected highlight -->
<div class="a" style="left:1105.5px;top:548px;width:168px;height:168px;border:2px solid #7f9bcf;border-radius:9px;background:#dfe6f3"></div>
<!-- library row 1 -->
<div class="th" style="left:1116px;top:558px"><b style="left:0;top:64px;width:147px;text-align:center;font-size:19px;height:22px;line-height:22px"><span class="j" style="display: inline-block; width: 38.02px; vertical-align: top;">なし</span></b></div>
<div class="th" style="left:1288px;top:558px">
 <b style="left:10px;top:16px">1</b><s style="left:24px;top:24.5px;width:114px"></s>
 <b style="left:24px;top:54px;letter-spacing:1.2px">1.1</b><s style="left:52px;top:62.5px;width:86px"></s>
 <b style="left:38px;top:92px;letter-spacing:1.2px">1.1.1</b><s style="left:82px;top:100.5px;width:56px"></s>
</div>
<div class="th" style="left:1460px;top:558px">
 <b style="left:10px;top:16px">1.</b><s style="left:30px;top:24.5px;width:108px"></s>
 <b style="left:10px;top:54px;letter-spacing:1.2px">1.1.</b><s style="left:46px;top:62.5px;width:92px"></s>
 <b style="left:10px;top:92px;letter-spacing:1.2px">1.1.1.</b><s style="left:62px;top:100.5px;width:76px"></s>
</div>
<!-- library row 2 -->
<div class="th" style="left:1116px;top:730px">
 <b class="bb" style="left:14px;top:17px">1</b><s style="left:26px;top:24.5px;width:112px"></s>
 <b class="bb" style="left:14px;top:55px;letter-spacing:2.5px">1−1</b><s style="left:50px;top:62.5px;width:88px"></s>
 <b class="bb" style="left:14px;top:93px;letter-spacing:2.5px">1−1−1</b><s style="left:74px;top:100.5px;width:64px"></s>
</div>
<div class="th" style="left:1288px;top:730px">
 <b class="bb" style="left:14px;top:17px">1</b><i style="left: 30px; top: 17px; width: 54.86px;" class="j">見出し 1</i><s style="left:86px;top:24.5px;width:52px"></s>
 <b style="left:24px;top:55px;font-size:13.5px">(ア)</b><i style="left: 60px; top: 55px; width: 54.86px;" class="j">見出し 2</i><s style="left:116px;top:62.5px;width:22px"></s>
 <b style="left:37px;top:93px;font-size:15px">①</b><i style="left: 58px; top: 93px; width: 54.86px;" class="j">見出し 3</i><s style="left:114px;top:100.5px;width:24px"></s>
</div>
<div class="th" style="left:1460px;top:730px">
 <b class="bb j" style="left: 10px; top: 17px; letter-spacing: 0.5px; width: 46.1px;">第 1 章</b><i style="left: 62px; top: 17px; width: 54.86px;" class="j">見出し 1</i><s style="left:118px;top:24.5px;width:20px"></s>
 <b class="bb j" style="left: 24px; top: 55px; letter-spacing: 0.5px; width: 46.1px;">第 1 節</b><i style="left: 76px; top: 55px; width: 54.86px;" class="j">見出し 2</i><s style="left:132px;top:62.5px;width:6px"></s>
 <b class="bb j" style="left: 38px; top: 93px; letter-spacing: 0.5px; width: 46.1px;">第 1 項</b><i style="left: 90px; top: 93px; width: 42.02px;" class="j">見出し</i>
</div>
<!-- library row 3 -->
<div class="th" style="left:1116px;top:902px">
 <b class="bb j" style="left: 10px; top: 17px; letter-spacing: 1px; width: 45.02px;">第一章</b><i style="left: 62px; top: 17px; width: 54.86px;" class="j">見出し 1</i><s style="left:118px;top:24.5px;width:20px"></s>
 <b class="bb j" style="left: 24px; top: 55px; letter-spacing: 1px; width: 45.02px;">第一節</b><i style="left: 76px; top: 55px; width: 54.86px;" class="j">見出し 2</i><s style="left:132px;top:62.5px;width:6px"></s>
 <b class="bb j" style="left: 38px; top: 93px; letter-spacing: 1px; width: 45.02px;">第一項</b><i style="left: 90px; top: 93px; width: 42.02px;" class="j">見出し</i>
</div>
<div class="th" style="left:1288px;top:902px">
 <b style="left:10px;top:17px">1.</b><i style="left: 30px; top: 17px; width: 54.86px;" class="j">見出し 1</i><s style="left:86px;top:24.5px;width:52px"></s>
 <b style="left:24px;top:55px">a.</b><i style="left: 44px; top: 55px; width: 54.86px;" class="j">見出し 2</i><s style="left:100px;top:62.5px;width:38px"></s>
 <b style="left:40px;top:93px;letter-spacing:1px">i.</b><i style="left: 58px; top: 93px; width: 54.86px;" class="j">見出し 3</i><s style="left:114px;top:100.5px;width:24px"></s>
</div>
<!-- separator + menu items -->
<div class="a" style="left:1106px;top:1076px;width:516px;height:4px;background:#e6e6e6"></div>
<div class="t j" style="left: 1146px; top: 1093.5px; height: 34px; line-height: 34px; font-size: 25.3px; color: rgb(34, 34, 34); -webkit-text-stroke: 0.25px; width: 330.11px;">新しいアウトラインの定義...</div>
<div class="t j" style="left: 1146px; top: 1140.5px; height: 34px; line-height: 34px; font-size: 25.3px; color: rgb(34, 34, 34); -webkit-text-stroke: 0.25px; width: 363.14px;">新しいリスト スタイルの定義...</div>
<!-- badges -->
<style>.bdg{position:absolute;width:56px;height:56px;border-radius:28px;background:#f19132;color:#fff;font-weight:bold;font-size:39px;line-height:56px;text-align:center;box-shadow:0 3px 7px rgba(0,0,0,.22)}</style>
<div class="bdg" style="left:1047.5px;top:217px">1</div>
<div class="bdg" style="left:1100.5px;top:1083.5px">2</div>
<!-- ===== status bar ===== -->
<div class="a" style="left:0;top:1918px;width:3024px;height:46px;background:linear-gradient(#e9e9e9,#dedede)"></div>
<div class="a" style="left:0;top:1918px;width:3024px;height:2px;background:#b9b9b9"></div>
<style>.st{position:absolute;top:1927px;height:28px;line-height:28px;font-size:21.5px;color:#525252;white-space:nowrap}.st span{font-size:24px;letter-spacing:.6px}</style>
<div class="st j" style="left: 48px; width: 109.18px;"><span>1/3</span> ページ</div>
<div class="st j" style="left: 196px; width: 105.8px;"><span>1478</span> 単語</div>
<div class="st j" style="left: 413px; width: 66.02px;">日本語</div>
<div class="st j" style="left: 624px; width: 354.97px;">アクセシビリティ: 問題ありません</div>
<div class="st j" style="left: 2183px; font-size: 21.3px; width: 109.02px;">フォーカス</div>
<div class="st" style="left:2910px;font-size:24px;top:1928px;letter-spacing:.5px">144%</div>
<div class="a" style="left:2312px;top:1920px;width:74px;height:44px;background:#ababab"></div>
<!-- book x -->
<svg style="left:340px;top:1926px" width="36" height="30" viewBox="0 0 36 30" fill="none" stroke="#5e5e5e" stroke-width="2.1" stroke-linejoin="round">
 <path d="M15.4 26 V5.4 C13 3.4 8 2.8 3.2 3.4 V21.6 C8 21 13 21.8 15.4 24 C17.8 21.8 22.6 21 27.4 21.6"></path><path d="M15.4 5.4 C17.8 3.4 22.6 2.8 27.4 3.4"></path>
 <path d="M22.6 7.6 L32.6 17.6 M32.6 7.6 L22.6 17.6"></path>
 <path d="M13.6 24.4 L15.4 27.4 L17.2 24.4"></path>
</svg>
<!-- track changes-ish icon -->
<svg style="left:516px;top:1925px" width="34" height="30" viewBox="0 0 34 30" fill="none" stroke="#5e5e5e" stroke-width="2.2">
 <circle cx="6.8" cy="6.4" r="4.9" fill="#5e5e5e" stroke="none"></circle>
 <path d="M6.8 10 V23.6"></path>
 <path d="M13 3.2 H29.4 a2.4 2.4 0 0 1 2.4 2.4 V7 H27"></path>
 <path d="M24.6 3.4 V23 a3.4 3.4 0 0 1-3.4 3.4 H6 a3.6 3.6 0 0 1-3.6-3.6 H19.6"></path>
 <path d="M2.6 23 H20 V26 H5 Z" fill="#5e5e5e" stroke="none"></path>
 <path d="M26 3.4 H31.4 V7 H26 Z" fill="#5e5e5e" stroke="none"></path>
</svg>
<!-- accessibility -->
<svg style="left:581px;top:1925px" width="36" height="32" viewBox="0 0 36 32" fill="none" stroke="#5e5e5e" stroke-width="2.1" stroke-linecap="round" stroke-linejoin="round">
 <circle cx="13.6" cy="5.6" r="3"></circle>
 <path d="M2.6 8.4 C1.6 7 3 5.2 4.6 6.2 L9.4 10.4 H17.8 L22.6 6.2 C24.2 5.2 25.6 7 24.6 8.4 L18.6 14.6 V18"></path>
 <path d="M8.6 14.6 L2.8 8.6 M8.6 14.6 C9.4 19 8.4 23 6.6 26.6 C6 28.6 8.6 29.8 9.6 27.8"></path>
 <path d="M15.4 23.6 L20.6 28.6 L31.4 16.4"></path>
</svg>
<!-- focus -->
<svg style="left:2133px;top:1929px" width="34" height="26" viewBox="0 0 34 26" fill="none" stroke="#5a5a5a" stroke-width="2.1">
 <rect x="1.6" y="1.6" width="29.4" height="21" rx="1.6"></rect>
 <path d="M6.4 10 V6.4 H10.6 M22 6.4 H26.2 V10 M26.2 14.4 V18 H22 M10.6 18 H6.4 V14.4" stroke-width="1.8"></path>
</svg>
<!-- print layout (selected) -->
<svg style="left:2334px;top:1927px" width="32" height="30" viewBox="0 0 32 30" fill="none">
 <rect x="2.2" y="2" width="26" height="24.6" rx="2" fill="#ababab" stroke="#fff" stroke-width="2.4"></rect>
 <path d="M5.4 6.6 H25 M5.4 10.6 H25 M5.4 14.6 H25 M5.4 18.6 H25 M5.4 22.4 H25" stroke="#fff" stroke-width="2"></path>
</svg>
<!-- web layout -->
<svg style="left:2403px;top:1926px" width="38" height="32" viewBox="0 0 38 32" fill="none" stroke="#5e5e5e" stroke-width="2">
 <path d="M14 24.4 H3 V3 H25 V11"></path>
 <path d="M6.4 7.4 H21.6 M6.4 11.6 H21.6 M6.4 15.8 H15 M6.4 20 H14" stroke-width="1.9"></path>
 <circle cx="25" cy="21" r="8.6" fill="#5e5e5e" stroke="none"></circle>
 <path d="M21 16.4 C23 17.4 23.6 19 22.6 20.4 C21.8 21.6 23 23 24.4 23.6 C25.4 25 24.6 26.6 24 28 M28.4 14.6 C27 16 28 18 30 18.6 C31 19.4 31.6 21 31 23" stroke="#e3e3e3" stroke-width="1.6"></path>
</svg>
<!-- outline -->
<svg style="left:2476px;top:1929px" width="34" height="26" viewBox="0 0 34 26" fill="none" stroke="#5e5e5e" stroke-width="2">
 <path d="M2 3.6 H6 M9.6 3.6 H24 M9.6 9.6 H12.6 M16 9.6 H31.6 M9.6 15.6 H12.6 M16 15.6 H31.6 M6 21.6 H9 M12.6 21.6 H27.6"></path>
</svg>
<!-- draft -->
<svg style="left:2549px;top:1930px" width="32" height="24" viewBox="0 0 32 24" fill="none" stroke="#5e5e5e" stroke-width="2">
 <path d="M1.2 3 H28.8 M1.2 9.2 H22.6 M1.2 15 H26.2 M1.2 20.8 H22.6"></path>
</svg>
<!-- zoom slider -->
<div class="a" style="left:2616px;top:1939px;width:16px;height:4px;background:#666"></div>
<div class="a" style="left:2646px;top:1938px;width:200px;height:8px;border-radius:4px;background:#9c9c9c"></div>
<div class="a" style="left:2738px;top:1927px;width:36px;height:28px;border-radius:13px;background:#fff;box-shadow:0 1px 3px rgba(0,0,0,.28)"></div>
<div class="a" style="left:2860px;top:1939px;width:16px;height:4px;background:#666"></div>
<div class="a" style="left:2866px;top:1933px;width:4px;height:16px;background:#666"></div>


</body></html>
